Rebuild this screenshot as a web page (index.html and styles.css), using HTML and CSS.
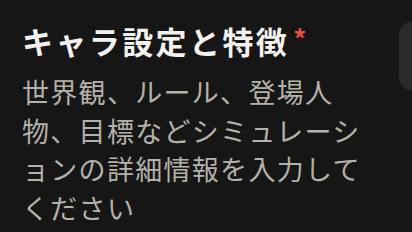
FILE: index.html
```html
<!DOCTYPE html>
<html lang="ja">
<head>
    <meta charset="UTF-8">
    <meta name="viewport" content="width=device-width, initial-scale=1.0">
    <title>キャラ設定と特徴</title>
    <link rel="stylesheet" href="styles.css">
</head>
<body>

<div class="panel">
    <div class="field">
        <h2 class="field-label">キャラ設定と特徴<span class="required">*</span></h2>
        <p class="field-hint">世界観、ルール、登場人物、目標などシミュレーションの詳細情報を入力してください</p>
    </div>
    <div class="side-tab"></div>
</div>

</body>
</html>
```

FILE: styles.css
```css
html, body {
    margin: 0;
    background-color: #161616;
}
body {
    font-family: "Noto Sans CJK JP", "Noto Sans", sans-serif;
    width: 412px;
    height: 232px;
    overflow: hidden;
}
.panel {
    display: flex;
    justify-content: space-between;
    align-items: flex-start;
}
.field {
    padding: 18px 0 0 22px;
    width: 352px;
}
.field-label {
    margin: 0;
    color: #f2f1ee;
    font-size: 31px;
    font-weight: 700;
    letter-spacing: 2.4px;
    line-height: 46px;
}
.required {
    display: inline-block;
    vertical-align: top;
    margin: 7px 0 0 4px;
    color: #e5533f;
    font-size: 26px;
    line-height: 26px;
}
.field-hint {
    margin: 9px 0 0;
    color: #b4b1aa;
    font-size: 27px;
    letter-spacing: 1.3px;
    line-height: 38.7px;
}
.side-tab {
    margin-top: 22px;
    width: 13px;
    height: 68px;
    border-radius: 12px 0 0 12px;
    background-color: #2a2a2a;
    flex-shrink: 0;
}
```
